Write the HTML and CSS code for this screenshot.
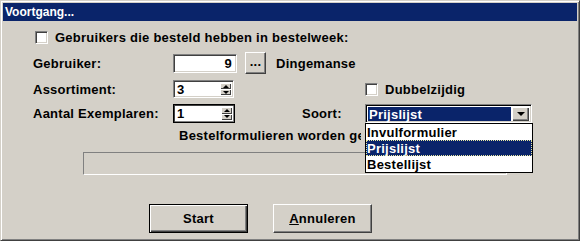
FILE: index.html
```html
<!DOCTYPE html>
<html lang="nl">
<head>
    <meta charset="UTF-8">
    <title>Voortgang...</title>
    <link rel="stylesheet" href="styles.css">
</head>
<body>
    <div class="window">
        <div class="titlebar">Voortgang...</div>
        <div class="content">
            <div class="row row-check">
                <span class="check check-first"></span>
                <span>Gebruikers die besteld hebben in bestelweek:</span>
            </div>
            <div class="row row-user">
                <span class="label">Gebruiker:</span>
                <span class="field field-user">9</span>
                <span class="btn btn-dots">...</span>
                <span class="name">Dingemanse</span>
            </div>
            <div class="row row-spin">
                <span class="label">Assortiment:</span>
                <span class="spin">
                    <span class="spin-value">3</span>
                    <span class="spin-btns">
                        <span class="spin-btn"><span class="arrow-up"></span></span>
                        <span class="spin-btn"><span class="arrow-down"></span></span>
                    </span>
                </span>
                <span class="check-right">
                    <span class="check"></span>
                    <span>Dubbelzijdig</span>
                </span>
            </div>
            <div class="row row-spin2">
                <span class="label">Aantal Exemplaren:</span>
                <span class="spin spin-focus">
                    <span class="spin-value">1</span>
                    <span class="spin-btns">
                        <span class="spin-btn"><span class="arrow-up"></span></span>
                        <span class="spin-btn"><span class="arrow-down"></span></span>
                    </span>
                </span>
                <span class="soort">Soort:</span>
                <div class="combo">
                    <span class="combo-value">Prijslijst</span>
                    <span class="combo-btn"><span class="arrow-combo"></span></span>
                    <div class="combo-list">
                        <div class="combo-item">Invulformulier</div>
                        <div class="combo-item selected">Prijslijst</div>
                        <div class="combo-item">Bestellijst</div>
                    </div>
                </div>
            </div>
            <div class="status"><span class="status-text">Bestelformulieren worden gegenereerd...</span></div>
            <div class="progress"></div>
            <div class="buttons">
                <span class="btn btn-default">Start</span>
                <span class="btn btn-big"><u>A</u>nnuleren</span>
            </div>
        </div>
    </div>
</body>
</html>
```

FILE: styles.css
```css
body {
    margin: 0;
    font-family: "Liberation Sans", Arial, sans-serif;
    font-weight: bold;
    font-size: 13px;
    letter-spacing: 0.25px;
    color: #000;
    background: #d4d0c8;
}
.window {
    width: 580px;
    height: 241px;
    box-sizing: border-box;
    background: #d4d0c8;
    border: 1px solid;
    border-color: #d4d0c8 #404040 #404040 #d4d0c8;
    box-shadow: inset 1px 1px #fff, inset -1px -1px #808080;
    padding: 2px;
}
.titlebar {
    height: 18px;
    line-height: 18px;
    background: #0a246a;
    color: #fff;
    font-size: 12px;
    letter-spacing: 0;
    padding-left: 2px;
}
.content {
    padding-left: 30px;
}
.row {
    display: flex;
    align-items: center;
}
.row-check {
    height: 17px;
    margin-top: 8px;
}
.row-user {
    height: 22px;
    margin-top: 6px;
}
.row-spin {
    height: 18px;
    margin-top: 6px;
}
.row-spin2 {
    height: 19px;
    margin-top: 6px;
}
.label {
    width: 140px;
}
.check {
    width: 13px;
    height: 13px;
    box-sizing: border-box;
    background: #fff;
    border: 1px solid;
    border-color: #808080 #fff #fff #808080;
    box-shadow: inset 1px 1px #404040, inset -1px -1px #d4d0c8;
    margin-right: 7px;
}
.check-first {
    margin-left: 2px;
}
.field, .spin {
    box-sizing: border-box;
    background: #fff;
    border: 1px solid;
    border-color: #808080 #fff #fff #808080;
    box-shadow: inset 1px 1px #404040, inset -1px -1px #d4d0c8;
}
.field-user {
    width: 64px;
    height: 19px;
    line-height: 17px;
    text-align: right;
    padding-right: 4px;
}
.btn {
    display: flex;
    align-items: center;
    justify-content: center;
    box-sizing: border-box;
    background: #d4d0c8;
    border: 1px solid;
    border-color: #fff #404040 #404040 #fff;
    box-shadow: inset -1px -1px #808080;
}
.btn-dots {
    width: 21px;
    height: 22px;
    margin-left: 8px;
    padding-bottom: 3px;
}
.name {
    margin-left: 10px;
}
.spin {
    display: flex;
    width: 61px;
    height: 100%;
    padding: 2px;
}
.spin-focus {
    width: 62px;
    border-color: #000;
    box-shadow: inset 1px 1px #404040, inset -1px -1px #808080;
}
.spin-value {
    flex: 1;
    line-height: 14px;
    padding-left: 1px;
}
.spin-btns {
    display: flex;
    flex-direction: column;
    width: 11px;
}
.spin-btn {
    flex: 1;
    display: flex;
    align-items: center;
    justify-content: center;
    background: #d4d0c8;
    box-shadow: inset 1px 1px #fff, inset -1px -1px #404040;
}
.arrow-up {
    border-left: 3px solid transparent;
    border-right: 3px solid transparent;
    border-bottom: 3px solid #000;
}
.arrow-down {
    border-left: 3px solid transparent;
    border-right: 3px solid transparent;
    border-top: 3px solid #000;
}
.check-right {
    display: flex;
    align-items: center;
    margin-left: 131px;
}
.soort {
    margin-left: 67px;
    width: 63px;
}
.combo {
    position: relative;
    display: flex;
    width: 167px;
    height: 19px;
    box-sizing: border-box;
    background: #fff;
    border: 1px solid;
    border-color: #808080 #fff #fff #808080;
    box-shadow: inset 1px 1px #000, inset -1px -1px #d4d0c8;
    padding: 2px 2px 1px 2px;
}
.combo-value {
    flex: 1;
    background: #0a246a;
    color: #fff;
    line-height: 15px;
    padding-left: 1px;
    margin-right: 1px;
}
.combo-btn {
    display: flex;
    align-items: center;
    justify-content: center;
    width: 17px;
    background: #d4d0c8;
    box-shadow: inset 1px 1px #fff, inset -1px -1px #404040, inset -2px -2px #808080;
}
.arrow-combo {
    border-left: 4px solid transparent;
    border-right: 4px solid transparent;
    border-top: 4px solid #000;
}
.combo-list {
    position: absolute;
    top: 18px;
    left: -1px;
    width: 168px;
    box-sizing: border-box;
    background: #fff;
    border: 1px solid #000;
    z-index: 1;
}
.combo-item {
    height: 16px;
    box-sizing: border-box;
    padding: 1px 0 0 1px;
    line-height: 15px;
}
.combo-item.selected {
    background: #0a246a;
    color: #fff;
    outline: 1px dotted #e8e8a0;
    outline-offset: -1px;
}
.status {
    height: 16px;
    line-height: 16px;
    margin-top: 5px;
    padding-left: 146px;
}
.status-text {
    display: block;
    width: 182px;
    overflow: hidden;
    white-space: nowrap;
}
.progress {
    width: 424px;
    height: 23px;
    box-sizing: border-box;
    margin-top: 8px;
    margin-left: 50px;
    border: 1px solid;
    border-color: #808080 #fff #fff #808080;
}
.buttons {
    display: flex;
    gap: 25px;
    margin-top: 29px;
    margin-left: 116px;
}
.btn-default, .btn-big {
    width: 99px;
    height: 29px;
}
.btn-default {
    border-color: #000;
    box-shadow: inset 1px 1px #fff, inset -1px -1px #404040, inset -2px -2px #808080;
}
```
